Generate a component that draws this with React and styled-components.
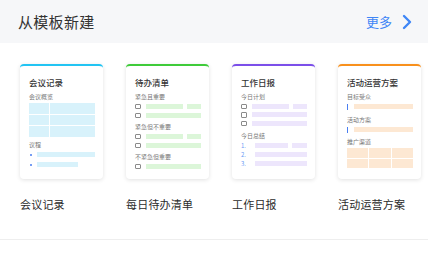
import React from 'react'
import styled, { createGlobalStyle } from 'styled-components'

const GlobalStyle = createGlobalStyle`
  body {
    margin: 0;
    background: #fff;
    font-family: 'Noto Sans CJK SC', 'Noto Sans', sans-serif;
    color: #333;
  }
`

const Page = styled.div`
  width: 428px;
  height: 259px;
  overflow: hidden;
  background: #fff;
`

const Header = styled.div`
  height: 43px;
  background: #f6f7f9;
  display: flex;
  align-items: center;
  justify-content: space-between;
  padding: 0 16px 0 18px;
`

const Title = styled.div`
  font-size: 15px;
  color: #333;
  letter-spacing: 0.3px;
`

const More = styled.div`
  display: flex;
  align-items: center;
  gap: 10px;
  color: #3f86f6;
  font-size: 13px;
`

const Body = styled.div`
  padding: 21px 0 0 20px;
  border-bottom: 1px solid #eeeeee;
  height: 197px;
  box-sizing: border-box;
`

const Row = styled.div`
  display: flex;
  gap: 23px;
`

const Item = styled.div`
  width: 83px;
  flex: none;
`

const Card = styled.div`
  height: 115px;
  box-sizing: border-box;
  background: #fff;
  border-radius: 4px;
  border-top: 2px solid ${(props) => props.accent};
  box-shadow: 0 1px 4px rgba(0, 0, 0, 0.12);
  padding: 10px 8px 0 9px;
`

const CardTitle = styled.div`
  font-size: 8.5px;
  line-height: 12px;
  font-weight: 500;
  color: #333;
  margin-bottom: 5px;
`

const Sub = styled.div`
  font-size: 6px;
  line-height: 8px;
  color: #777;
  margin: ${(props) => props.top || 0}px 0 ${(props) => props.bottom ?? 1}px;
`

const Label = styled.div`
  margin-top: 17px;
  font-size: 11px;
  line-height: 16px;
  color: #2b2b2b;
  white-space: nowrap;
  letter-spacing: 0.2px;
`

const Grid = styled.div`
  display: grid;
  grid-template-columns: ${(props) => props.cols};
  gap: 1px;
`

const Cell = styled.div`
  height: ${(props) => props.h}px;
  background: ${(props) => props.fill};
`

const Line = styled.div`
  display: flex;
  align-items: center;
  gap: ${(props) => props.gap ?? 4}px;
  height: ${(props) => props.h || 9}px;
`

const Bar = styled.div`
  height: 5px;
  background: ${(props) => props.fill};
  flex: ${(props) => (props.w ? 'none' : 1)};
  width: ${(props) => (props.w ? props.w + 'px' : 'auto')};
`

const Box = styled.div`
  width: 3.5px;
  height: 3.5px;
  border: 1px solid #8a8a8a;
  border-radius: 1px;
  flex: none;
  margin-right: 1px;
`

const Dot = styled.div`
  width: 2px;
  height: 2px;
  border-radius: 50%;
  background: #4a7ef0;
  margin: 0 5px 0 1px;
  flex: none;
`

const Num = styled.div`
  width: 10px;
  font-size: 6px;
  color: #6b9cf5;
  flex: none;
`

const Mark = styled.div`
  width: 1px;
  height: 6px;
  background: #4a7ef0;
  flex: none;
  margin-right: 6px;
`

const Chevron = () => (
  <svg width="10" height="16" viewBox="0 0 10 16">
    <polyline points="2,2 8,8 2,14" fill="none" stroke="#3f86f6" strokeWidth="2.4" strokeLinejoin="round" strokeLinecap="round" />
  </svg>
)

const CYAN = '#d8f2fb'
const GREEN = '#dcf6d9'
const PURPLE = '#ede6fc'
const ORANGE = '#fde8d3'

const MeetingCard = () => (
  <Card accent="#22c4f3">
    <CardTitle>会议记录</CardTitle>
    <Sub bottom={2}>会议概览</Sub>
    <Grid cols="20px 1fr">
      {[0, 1, 2, 3, 4, 5].map((i) => <Cell key={i} h={10.5} fill={CYAN} />)}
    </Grid>
    <Sub top={4}>议程</Sub>
    <Line h={10} gap={0}>
      <Dot />
      <Bar fill={CYAN} />
    </Line>
    <Line h={10} gap={0}>
      <Dot />
      <Bar fill={CYAN} w={41} />
    </Line>
  </Card>
)

const CheckRow = ({ split, fill, h }) => (
  <Line h={h}>
    <Box />
    <Bar fill={fill} />
    {split && <Bar fill={fill} w={14} />}
  </Line>
)

const TodoCard = () => (
  <Card accent="#3fcb3a">
    <CardTitle>待办清单</CardTitle>
    <Sub>紧急且重要</Sub>
    <CheckRow split fill={GREEN} />
    <CheckRow fill={GREEN} />
    <Sub top={3}>紧急但不重要</Sub>
    <CheckRow split fill={GREEN} />
    <CheckRow fill={GREEN} />
    <Sub top={3}>不紧急但重要</Sub>
    <CheckRow fill={GREEN} />
  </Card>
)

const NumRow = ({ n, split }) => (
  <Line h={9}>
    <Num>{n}.</Num>
    <Bar fill={PURPLE} />
    {split && <Bar fill={PURPLE} w={15} />}
  </Line>
)

const DailyCard = () => (
  <Card accent="#7b4fe9">
    <CardTitle>工作日报</CardTitle>
    <Sub>今日计划</Sub>
    <CheckRow split fill={PURPLE} h={8.5} />
    <CheckRow fill={PURPLE} h={8.5} />
    <CheckRow fill={PURPLE} h={8.5} />
    <Sub top={4.5}>今日总结</Sub>
    <NumRow n={1} split />
    <NumRow n={2} />
    <NumRow n={3} />
  </Card>
)

const CampaignCard = () => (
  <Card accent="#f8901c">
    <CardTitle>活动运营方案</CardTitle>
    <Sub>目标受众</Sub>
    <Line gap={0}>
      <Mark />
      <Bar fill={ORANGE} />
    </Line>
    <Sub top={5}>活动方案</Sub>
    <Line gap={0}>
      <Mark />
      <Bar fill={ORANGE} />
    </Line>
    <Sub top={4} bottom={2}>推广渠道</Sub>
    <Grid cols="1fr 1fr 1fr">
      {[0, 1, 2, 3, 4, 5].map((i) => <Cell key={i} h={9.5} fill={ORANGE} />)}
    </Grid>
  </Card>
)

const templates = [
  { name: '会议记录', card: <MeetingCard /> },
  { name: '每日待办清单', card: <TodoCard /> },
  { name: '工作日报', card: <DailyCard /> },
  { name: '活动运营方案', card: <CampaignCard /> },
]

export default function App() {
  return (
    <Page>
      <GlobalStyle />
      <Header>
        <Title>从模板新建</Title>
        <More>
          更多
          <Chevron />
        </More>
      </Header>
      <Body>
        <Row>
          {templates.map((t) => (
            <Item key={t.name}>
              {t.card}
              <Label>{t.name}</Label>
            </Item>
          ))}
        </Row>
      </Body>
    </Page>
  )
}
